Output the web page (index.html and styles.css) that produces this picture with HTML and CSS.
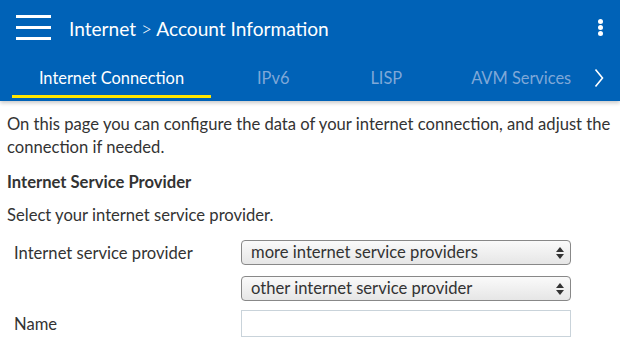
FILE: index.html
```html
<!DOCTYPE html>
<html>
<head>
<meta charset="utf-8">
<link rel="stylesheet" href="styles.css">
</head>
<body>
<header class="header">
  <div class="topbar">
    <div class="burger"><span></span><span></span><span></span></div>
    <div class="title">Internet <span class="sep">&gt;</span> Account Information</div>
    <div class="kebab"><span></span><span></span><span></span></div>
  </div>
  <nav class="tabs">
    <div class="tab active">Internet Connection</div>
    <div class="tab t2">IPv6</div>
    <div class="tab t3">LISP</div>
    <div class="tab t4">AVM Services</div>
    <div class="more">
      <svg width="10" height="20" viewBox="0 0 10 20"><path d="M1.5 1.5 L8.5 10 L1.5 18.5" fill="none" stroke="#fff" stroke-width="1.6"/></svg>
    </div>
  </nav>
</header>
<main class="content">
  <p class="intro">On this page you can configure the data of your internet connection, and adjust the connection if needed.</p>
  <h2 class="section">Internet Service Provider</h2>
  <p class="hint">Select your internet service provider.</p>
  <div class="row">
    <label class="label">Internet service provider</label>
    <div class="select">more internet service providers<span class="arrows"></span></div>
  </div>
  <div class="row">
    <span class="label"></span>
    <div class="select">other internet service provider<span class="arrows"></span></div>
  </div>
  <div class="row row-input">
    <label class="label">Name</label>
    <div class="input"></div>
  </div>
</main>
</body>
</html>
```
FILE: styles.css
```css
* { box-sizing: border-box; }
html, body { margin: 0; padding: 0; background: #fff; }
body { font-family: Lato, "Noto Sans", sans-serif; color: #333; overflow: hidden; }
.header { background: #0062b7; height: 101px; box-shadow: 0 2px 4px rgba(0,0,0,0.22); position: relative; z-index: 1; }
.topbar { height: 56px; display: flex; align-items: center; padding: 0 16px; }
.burger { width: 35px; display: flex; flex-direction: column; gap: 8px; margin-right: 18px; margin-top: -2px; }
.burger span { display: block; height: 3px; background: #fff; }
.title { color: #fff; font-size: 19.1px; flex: 1; }
.sep { font-weight: 300; }
.kebab { display: flex; flex-direction: column; gap: 1px; margin-right: 1px; margin-top: -2px; }
.kebab span { width: 5px; height: 5px; border-radius: 50%; background: #fff; }
.tabs { display: flex; height: 45px; padding-left: 12px; }
.tab { font-size: 16.4px; color: #7fa8d8; padding: 12px 0 0; text-align: center; }
.tab.active { color: #fff; width: 199px; border-bottom: 3px solid #ffe600; height: 42px; }
.t2 { margin-left: 46px; }
.t3 { margin-left: 81px; }
.t4 { margin-left: 69px; }
.more { margin-left: auto; padding: 12px 16px 0 0; }
.content { padding: 12px 7px; }
.intro { margin: 0; font-size: 16.6px; line-height: 23px; }
.section { margin: 12px 0 0; font-size: 16.6px; font-weight: bold; line-height: 23px; }
.hint { margin: 10px 0 0; font-size: 16.6px; line-height: 23px; }
.row { display: flex; align-items: center; margin-top: 11px; }
.row:first-of-type { margin-top: 13px; }
.row-input { margin-top: 9px; }
.label { width: 234px; padding-left: 7px; font-size: 16.6px; }
.select { width: 330px; height: 25px; border: 1px solid #888; border-radius: 4px; background: linear-gradient(#fafafa, #e6e6e6); font-size: 16.6px; line-height: 23px; padding-left: 9px; position: relative; }
.arrows { position: absolute; right: 6px; top: 6px; width: 8px; height: 12px; }
.arrows::before, .arrows::after { content: ""; position: absolute; left: 0; border-left: 4px solid transparent; border-right: 4px solid transparent; }
.arrows::before { top: 0; border-bottom: 5px solid #333; }
.arrows::after { bottom: 0; border-top: 5px solid #333; }
.input { width: 330px; height: 27px; border: 1px solid #c9d3da; background: #fff; }
```
